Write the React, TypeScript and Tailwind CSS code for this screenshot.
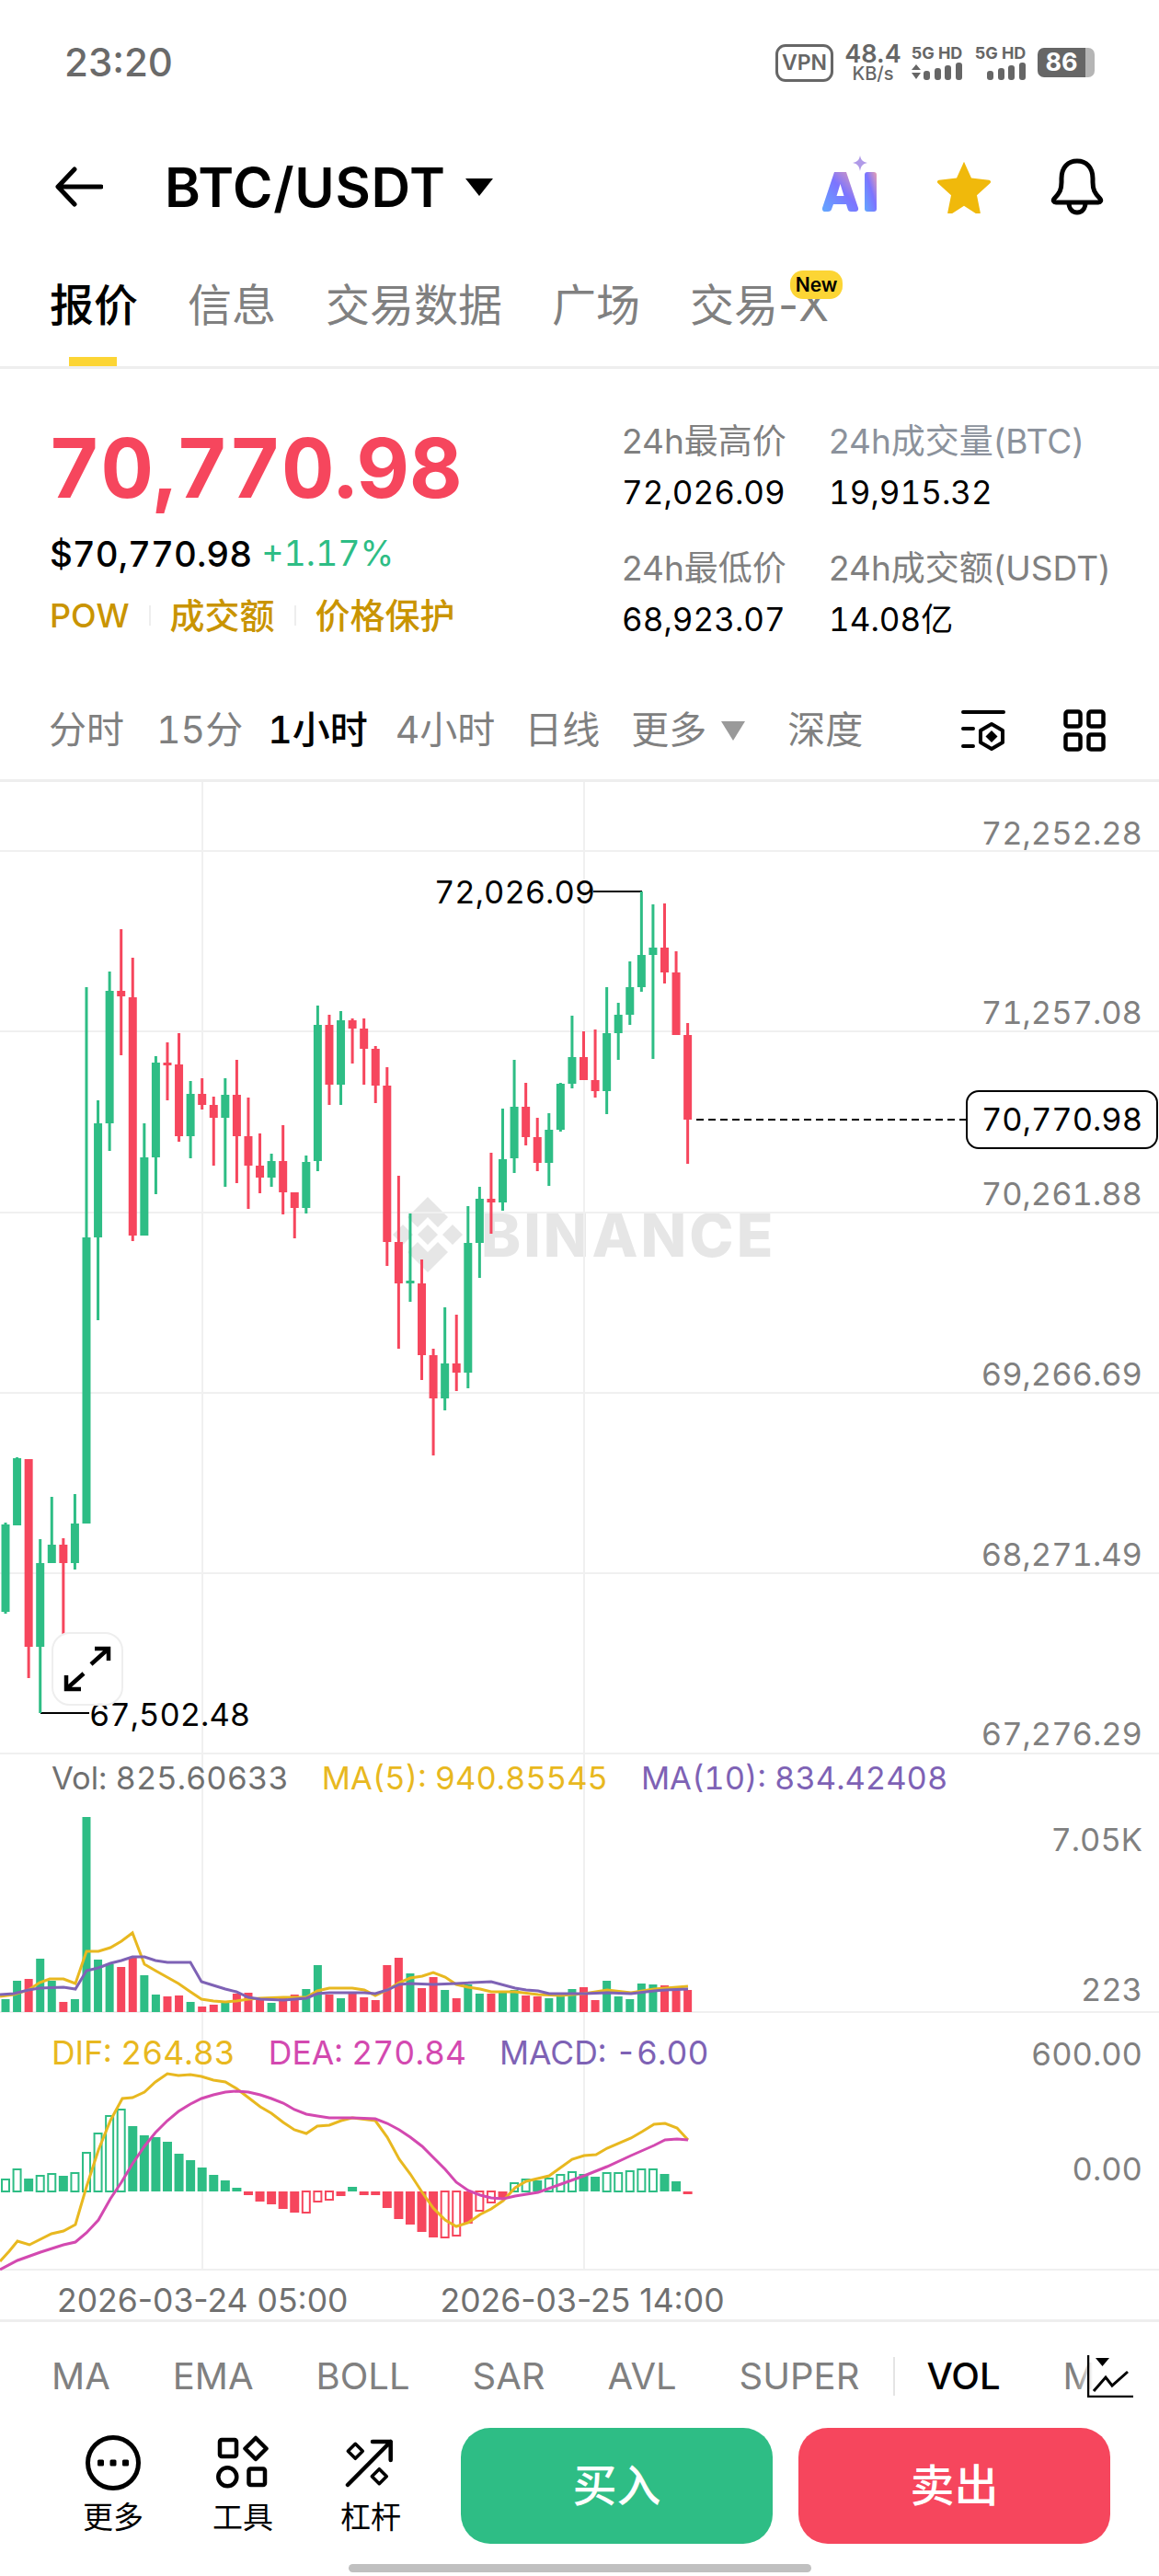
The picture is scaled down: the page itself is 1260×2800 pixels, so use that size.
import clsx from 'clsx';

const UP = '#2EBD85';
const DOWN = '#F6465D';
const CJK = "font-['Inter','Noto_Sans_CJK_SC',sans-serif]";

// candle x position, one slot every 12.57px
const cx = (i: number) => 6 + i * 12.57;

// [up?, bodyTop, bodyBottom, wickTop, wickBottom]
const CANDLES: [number, number, number, number, number][] = [
  [1, 1657, 1752, 1655, 1754], [1, 1585, 1658, 1584, 1658], [0, 1586, 1790, 1586, 1824], [1, 1699, 1790, 1673, 1862],
  [1, 1679, 1699, 1627, 1699], [0, 1679, 1699, 1672, 1778], [1, 1656, 1699, 1624, 1706], [1, 1345, 1656, 1073, 1656],
  [1, 1221, 1345, 1196, 1435], [1, 1077, 1221, 1056, 1251], [0, 1077, 1083, 1010, 1147], [0, 1084, 1343, 1041, 1349],
  [1, 1258, 1343, 1221, 1343], [1, 1155, 1258, 1148, 1298], [0, 1155, 1158, 1133, 1196], [0, 1157, 1235, 1123, 1241],
  [1, 1189, 1235, 1175, 1259], [0, 1189, 1201, 1172, 1206], [0, 1201, 1215, 1192, 1267], [1, 1190, 1215, 1172, 1290],
  [0, 1190, 1235, 1152, 1286], [0, 1235, 1267, 1193, 1314], [0, 1267, 1280, 1232, 1297], [1, 1262, 1280, 1254, 1290],
  [0, 1262, 1296, 1223, 1320], [0, 1296, 1313, 1296, 1346], [1, 1263, 1313, 1256, 1319], [1, 1114, 1262, 1093, 1273],
  [0, 1114, 1179, 1103, 1201], [1, 1109, 1179, 1099, 1201], [0, 1109, 1118, 1107, 1156], [0, 1118, 1140, 1107, 1179],
  [0, 1140, 1180, 1137, 1199], [0, 1180, 1350, 1160, 1376], [0, 1350, 1395, 1278, 1466], [1, 1392, 1395, 1319, 1415],
  [0, 1395, 1473, 1369, 1500], [0, 1473, 1520, 1466, 1582], [1, 1482, 1520, 1421, 1533], [0, 1482, 1492, 1429, 1512],
  [1, 1351, 1492, 1311, 1509], [1, 1303, 1351, 1290, 1389], [0, 1303, 1307, 1253, 1341], [1, 1260, 1307, 1205, 1316],
  [1, 1203, 1259, 1152, 1275], [0, 1203, 1236, 1177, 1245], [0, 1236, 1264, 1215, 1273], [1, 1228, 1264, 1210, 1289],
  [1, 1178, 1228, 1177, 1230], [1, 1149, 1178, 1104, 1183], [0, 1149, 1174, 1121, 1174], [0, 1174, 1186, 1119, 1193],
  [1, 1123, 1186, 1073, 1211], [1, 1103, 1123, 1090, 1152], [1, 1073, 1103, 1045, 1114], [1, 1038, 1073, 969, 1078],
  [1, 1030, 1038, 983, 1151], [0, 1030, 1057, 982, 1069], [0, 1057, 1125, 1034, 1125], [0, 1125, 1217, 1112, 1265],
];

const VOL_BASE = 2187;
const VOL_TOPS = [
  2173, 2153, 2151, 2129, 2153, 2176, 2173, 1975, 2130, 2135, 2138, 2127, 2147, 2168, 2170, 2169, 2176, 2181, 2179, 2177,
  2167, 2166, 2174, 2177, 2172, 2168, 2162, 2136, 2168, 2172, 2167, 2171, 2174, 2136, 2128, 2145, 2161, 2149, 2163, 2172,
  2157, 2167, 2167, 2166, 2163, 2169, 2170, 2172, 2169, 2162, 2160, 2174, 2153, 2170, 2173, 2156, 2157, 2158, 2161, 2163,
];

const MA5 = '0,2170 15,2168 31,2163 43,2155 54,2151 69,2151 82,2156 94,2121 107,2121 120,2117 132,2110 144,2101 157,2135 169,2142 194,2156 207,2165 219,2173 232,2175 245,2176 257,2175 270,2173 283,2172 308,2171 333,2171 345,2164 358,2161 383,2161 396,2163 408,2169 421,2163 434,2155 446,2150 459,2148 471,2144 484,2149 496,2157 509,2160 522,2162 534,2165 560,2165 585,2168 610,2169 635,2167 660,2163 686,2166 711,2162 748,2159';
const MA10 = '0,2168 15,2167 31,2163 43,2161 69,2160 82,2162 94,2142 107,2139 120,2134 132,2131 144,2127 157,2127 169,2131 182,2133 207,2133 219,2154 232,2158 245,2162 257,2165 270,2171 283,2173 308,2174 333,2172 345,2167 358,2166 396,2166 408,2167 421,2163 434,2157 446,2156 471,2157 496,2156 534,2154 560,2161 572,2163 585,2164 597,2167 635,2167 660,2166 686,2167 711,2164 723,2163 748,2162';
const DIF = '0,2458 10,2447 19,2436 32,2440 56,2428 69,2425 82,2418 94,2377 107,2337 120,2305 133,2281 144,2280 157,2274 169,2263 182,2254 194,2256 207,2255 219,2257 232,2261 245,2263 257,2270 270,2280 283,2290 295,2297 308,2307 320,2315 333,2319 345,2311 358,2310 371,2305 383,2302 408,2305 421,2323 434,2347 446,2363 459,2383 471,2400 484,2413 496,2420 509,2416 522,2407 534,2401 547,2392 560,2378 572,2371 597,2365 622,2347 635,2343 648,2342 660,2335 686,2324 698,2317 711,2309 723,2308 736,2313 748,2326';
const DEA = '0,2467 19,2457 44,2448 69,2440 82,2437 94,2427 107,2413 120,2390 132,2372 144,2352 157,2333 169,2318 182,2305 194,2295 207,2287 219,2281 232,2277 245,2274 257,2273 270,2274 283,2277 295,2281 308,2286 320,2293 333,2298 345,2300 358,2302 383,2302 408,2303 421,2308 434,2315 446,2323 459,2333 471,2345 484,2358 496,2372 509,2381 522,2386 534,2389 547,2390 560,2387 585,2383 610,2374 635,2365 660,2355 686,2343 711,2332 723,2326 736,2325 748,2326';

const MACD_BASE = 2382;
// [top or bottom y, hollow?]
const MACD: [number, number][] = [
  [2369, 1], [2358, 1], [2368, 0], [2365, 1], [2363, 1], [2365, 0], [2362, 1], [2340, 1], [2319, 1], [2300, 1],
  [2293, 1], [2311, 0], [2321, 0], [2323, 0], [2328, 0], [2341, 0], [2348, 0], [2356, 0], [2364, 0], [2370, 0],
  [2378, 0], [2386, 0], [2393, 0], [2396, 0], [2401, 0], [2405, 0], [2405, 1], [2393, 1], [2391, 1], [2387, 0],
  [2377, 0], [2386, 0], [2386, 0], [2400, 0], [2412, 0], [2418, 0], [2426, 0], [2432, 0], [2432, 1], [2430, 1],
  [2417, 0], [2403, 1], [2394, 1], [2390, 0], [2373, 1], [2369, 1], [2370, 0], [2368, 1], [2364, 1], [2361, 1],
  [2363, 0], [2366, 0], [2362, 1], [2362, 1], [2360, 1], [2358, 1], [2358, 1], [2363, 0], [2371, 0], [2385, 0],
];
// bars after i=20 are red until the flip back to green, i=30 is a lone green one
const macdUp = (i: number) => i <= 20 || i === 30 || (i >= 44 && i <= 58);

const CHART_TOP = 850;
const AXIS = [
  ['72,252.28', 906], ['71,257.08', 1101], ['70,261.88', 1298], ['69,266.69', 1494], ['68,271.49', 1690], ['67,276.29', 1885],
  ['7.05K', 2000], ['223', 2163], ['600.00', 2233], ['0.00', 2358],
] as const;

function StatusBar() {
  return (
    <div className="h-[136px] flex items-center justify-between pl-[70px] pr-[70px] shrink-0">
      <span className="text-[42px] font-medium text-[#6a6a6a] leading-none">23:20</span>
      <div className="flex items-center gap-[12px] text-[#666]">
        <span className="w-[63px] h-[41px] border-[3px] border-[#666] rounded-[11px] flex items-center justify-center text-[23px] font-semibold">VPN</span>
        <div className="flex flex-col items-center w-[58px] leading-none ml-[2px]">
          <span className="text-[27px] font-semibold leading-[24px]">48.4</span>
          <span className="text-[20px] font-medium leading-[18px]">KB/s</span>
        </div>
        <Signal arrows />
        <Signal />
        <div className="flex items-center">
          <span className="w-[52px] h-[32px] bg-[#666] rounded-l-[7px] flex items-center justify-center text-[27px] font-bold text-white">86</span>
          <span className="w-[10px] h-[32px] bg-[#b5b5b5] rounded-r-[7px]" />
        </div>
      </div>
    </div>
  );
}

function Signal({ arrows }: { arrows?: boolean }) {
  return (
    <div className="flex flex-col items-center w-[57px]">
      <span className="text-[18px] font-bold leading-[20px] whitespace-nowrap">5G HD</span>
      <svg width="57" height="20" viewBox="0 0 57 20" fill="#666">
        {arrows && <path d="M1 8 6 2l5 6zM1 11h10l-5 7z" />}
        <rect x="14" y="9" width="7" height="10" rx="3" />
        <rect x="26" y="6" width="7" height="13" rx="3" />
        <rect x="37" y="3" width="7" height="16" rx="3" />
        <rect x="49" y="0" width="7" height="19" rx="3" />
      </svg>
    </div>
  );
}

function Header() {
  return (
    <div className="h-[134px] flex items-center shrink-0 pl-[60px] pr-[60px]">
      <svg width="52" height="44" viewBox="0 0 52 44" fill="none" stroke="#000" strokeWidth="5" strokeLinecap="round" strokeLinejoin="round">
        <path d="M4 22h46M21 3 3 22l18 19" />
      </svg>
      <span className="ml-[67px] text-[59px] font-semibold tracking-[0.7px] text-black leading-none">BTC/USDT</span>
      <svg className="ml-[20px]" width="32" height="20" viewBox="0 0 32 20"><path d="M1 1h30L16 20z" fill="#000" /></svg>
      <div className="ml-auto flex items-center">
        <AiIcon />
        <svg className="ml-[64px]" width="60" height="58" viewBox="0 0 24 23">
          <path
            d="M12 .6l3.2 7.1 7.7.9c.7.1 1 .9.4 1.4l-5.7 5.2 1.5 7.5c.1.7-.6 1.2-1.200.9L12 19.800l-5.900 3.800c-.6.300-1.300-.2-1.200-.9l1.500-7.500L.7 10c-.6-.5-.3-1.300.4-1.400l7.700-.9z"
            fill="#F0B90B"
          />
        </svg>
        <svg className="ml-[64px]" width="58" height="62" viewBox="0 0 58 62" fill="none" stroke="#000" strokeWidth="5" strokeLinejoin="round">
          <path d="M4 44c6-6 8-10 8-18v-4C12 10 19 3 29 3s17 7 17 19v4c0 8 2 12 8 18 1.500 2 .5 4-2 4H6c-2.500 0-3.500-2-2-4z" />
          <path d="M20 48c0 7 4 11 9 11s9-4 9-11" />
        </svg>
      </div>
    </div>
  );
}

function AiIcon() {
  return (
    <svg width="60" height="62" viewBox="0 0 60 62" className="-mt-[6px]">
      <defs>
        <linearGradient id="ai" x1="0" y1="1" x2="1" y2="0">
          <stop offset="0" stopColor="#62A8FF" />
          <stop offset="0.55" stopColor="#7C74FF" />
          <stop offset="1" stopColor="#E8A0B0" />
        </linearGradient>
      </defs>
      <path d="M41 0c1 5 3 7 8 8-5 1-7 3-8 9-1-6-3-8-8-9 5-1 7-3 8-8z" fill="#B09AE8" />
      <path
        d="M13 18h13l13 39c.5 2-.5 4-3 4h-5c-2 0-3-1-3.500-3l-1.500-5H12l-2 5.500C9.500 60 8.500 61 6 61H3c-2.500 0-3.500-2-3-4zm6.500 13-4 13h8z"
        fill="url(#ai)"
      />
      <rect x="46" y="18" width="13" height="43" rx="3" fill="url(#ai)" />
    </svg>
  );
}

function Tabs() {
  const tabs = ['信息', '交易数据', '广场'];
  return (
    <div className="h-[131px] shrink-0 border-b-[3px] border-[#eeeeee] pl-[54px] flex items-start gap-[54px] pt-[31px] text-[48px] leading-[62px] text-[#808080]">
      <span className="relative h-[97px] font-medium text-black">
        报价
        <span className="absolute left-[21px] bottom-0 w-[52px] h-[10px] bg-[#FCD535]" />
      </span>
      {tabs.map((t) => (
        <span key={t}>{t}</span>
      ))}
      <span className="relative whitespace-nowrap">
        交易-X
        <span className="absolute left-[109px] top-[-7px] w-[57px] h-[31px] bg-[#FCD535] rounded-[14px] flex items-center justify-center text-[21px] font-semibold text-black">
          New
        </span>
      </span>
    </div>
  );
}

function Stat({ label, value, bluish }: { label: string; value: string; bluish?: boolean }) {
  return (
    <div className="flex flex-col gap-[13px] leading-[42px] whitespace-nowrap">
      <span className={clsx('text-[37px]', bluish ? 'text-[#8b929c]' : 'text-[#808080]')}>{label}</span>
      <span className="text-[35px] text-black tabular-nums">{value}</span>
    </div>
  );
}

function PriceBlock() {
  return (
    <div className="h-[340px] shrink-0 flex pl-[54px] pt-[58px]">
      <div className="w-[622px]">
        <div className="-ml-[2px] text-[89px] font-bold leading-[100px] text-[#F6465D] tabular-nums">70,770.98</div>
        <div className="mt-[20px] flex items-center gap-[10px] text-[38.500px] leading-[46px] tabular-nums">
          <span className="text-black font-medium">$70,770.98</span>
          <span className="text-[37.500px] text-[#2EBD85]">+1.17%</span>
        </div>
        <div className="mt-[21px] flex items-center text-[38px] leading-[46px] text-[#C99400] font-medium">
          <span className="text-[36px]">POW</span>
          <span className="mx-[21px] w-[2px] h-[22px] bg-[#eeeeee]" />
          <span>成交额</span>
          <span className="mx-[21px] w-[2px] h-[22px] bg-[#eeeeee]" />
          <span>价格保护</span>
        </div>
      </div>
      <div className="grid grid-cols-[225px_auto] gap-y-[41px] self-start">
        <Stat label="24h最高价" value="72,026.09" />
        <Stat label="24h成交量(BTC)" value="19,915.32" bluish />
        <Stat label="24h最低价" value="68,923.07" />
        <Stat label="24h成交额(USDT)" value="14.08亿" />
      </div>
    </div>
  );
}

function IntervalRow() {
  return (
    <div className="h-[109px] shrink-0 border-b-[3px] border-[#eeeeee] flex items-center pl-[53px] pr-[58px] text-[41px] text-[#808080] tabular-nums">
      <span>分时</span>
      <span className="ml-[35px]">15分</span>
      <span className="ml-[27px] text-black font-medium">1小时</span>
      <span className="ml-[30px]">4小时</span>
      <span className="ml-[32px]">日线</span>
      <span className="ml-[34px]">更多</span>
      <svg className="ml-[16px]" width="26" height="21" viewBox="0 0 26 21"><path d="M0 0h26L13 21z" fill="#9a9a9a" /></svg>
      <span className="ml-[46px]">深度</span>
      <svg className="ml-auto" width="48" height="45" viewBox="0 0 48 45" fill="none" stroke="#000" strokeWidth="4" strokeLinecap="round" strokeLinejoin="round">
        <path d="M2 2h44M2 20h11M2 39h11" />
        <path d="M33 15l12 7v13l-12 7-12-7V22z" />
        <path d="M33 22l6.500 6.500L33 35l-6.500-6.500z" fill="#000" stroke="none" />
      </svg>
      <svg className="ml-[63px]" width="46" height="46" viewBox="0 0 46 46" fill="none" stroke="#000" strokeWidth="4.500">
        <rect x="2.500" y="2.500" width="16" height="16" rx="2.500" />
        <rect x="27.500" y="2.500" width="16" height="16" rx="2.500" />
        <rect x="2.500" y="27.500" width="16" height="16" rx="2.500" />
        <rect x="27.500" y="27.500" width="16" height="16" rx="2.500" />
      </svg>
    </div>
  );
}

function ChartDrawing() {
  const h = 2470 - CHART_TOP;
  return (
    <svg className="absolute inset-0" width="1260" height={h} viewBox={`0 ${CHART_TOP} 1260 ${h}`}>
      {[925, 1121, 1318, 1514, 1710, 1906, 2187, 2467].map((y) => (
        <line key={y} x1="0" x2="1260" y1={y} y2={y} stroke="#f0f0f0" strokeWidth="2" />
      ))}
      {[220, 635].map((x) => (
        <line key={x} x1={x} x2={x} y1={CHART_TOP} y2="2467" stroke="#f0f0f0" strokeWidth="2" />
      ))}
      {/* high / low / last price leaders */}
      <path d="M645 969H698M44 1862H97" stroke="#000" strokeWidth="2" fill="none" />
      <line x1="757" x2="1050" y1="1217" y2="1217" stroke="#000" strokeWidth="2" strokeDasharray="8 5" />
      {CANDLES.map(([up, top, bottom, wickTop, wickBottom], i) => (
        <g key={i} fill={up ? UP : DOWN}>
          <rect x={cx(i) - 1.5} y={wickTop} width="3" height={wickBottom - wickTop} />
          <rect x={cx(i) - 4.5} y={top} width="9" height={Math.max(bottom - top, 3)} />
        </g>
      ))}
      {VOL_TOPS.map((top, i) => (
        <rect key={i} x={cx(i) - 4.5} y={top} width="9" height={VOL_BASE - top} fill={CANDLES[i][0] ? UP : DOWN} />
      ))}
      <polyline points={MA5} fill="none" stroke="#E8B820" strokeWidth="3" />
      <polyline points={MA10} fill="none" stroke="#7E62B5" strokeWidth="3" />
      {MACD.map(([y, hollow], i) => {
        const color = macdUp(i) ? UP : DOWN;
        const top = Math.min(y, MACD_BASE);
        const height = Math.max(Math.abs(y - MACD_BASE), 3);
        return hollow ? (
          <rect key={i} x={cx(i) - 4} y={top} width="8" height={height} fill="none" stroke={color} strokeWidth="2" />
        ) : (
          <rect key={i} x={cx(i) - 5} y={top} width="10" height={height} fill={color} />
        );
      })}
      <polyline points={DIF} fill="none" stroke="#E8B820" strokeWidth="3" />
      <polyline points={DEA} fill="none" stroke="#D349B0" strokeWidth="3" />
    </svg>
  );
}

function ChartArea() {
  return (
    <div className="relative h-[1618px] shrink-0 overflow-hidden text-[34.500px] leading-none whitespace-nowrap tabular-nums">
      {/* watermark sits under the candles */}
      <div className="absolute left-[427px] top-[451px] flex items-center gap-[20px] text-[#e6e6e6]">
        <svg width="76" height="82" viewBox="0 0 76 82" fill="#e6e6e6">
          <path d="M38 0 60 22 49 33 38 22 27 33 16 22zM11 30l11 11-11 11L0 41zM65 30l11 11-11 11-11-11zM38 30l11 11-11 11-11-11zM27 49l11 11 11-11 11 11-22 22-22-22z" />
        </svg>
        <span className="text-[65px] font-extrabold tracking-[3px] leading-none">BINANCE</span>
      </div>

      <ChartDrawing />

      <span className="absolute left-[472px] top-[103px] text-black">72,026.09</span>
      <span className="absolute left-[97px] top-[997px] text-black">67,502.48</span>

      {AXIS.map(([label, y]) => (
        <span key={label} className="absolute right-[18px] text-[#808080]" style={{ top: y - CHART_TOP - 17 }}>
          {label}
        </span>
      ))}

      <span className="absolute left-[1050px] top-[335px] w-[209px] h-[64px] bg-white border-2 border-black rounded-[14px] flex items-center justify-center text-black">
        70,770.98
      </span>

      <button className="absolute left-[56px] top-[924px] w-[78px] h-[80px] bg-white/95 border-2 border-[#eeeeee] rounded-[20px] flex items-center justify-center">
        <svg width="52" height="50" viewBox="0 0 52 50" fill="none" stroke="#000" strokeWidth="4.500">
          <path d="M30 20 49 3M34 3h15v13M22 30 3 47M3 32v15h16" />
        </svg>
      </button>

      <div className="absolute left-[56px] top-[1066px] flex gap-[36px]">
        <span className="text-[#707070]">Vol: 825.60633</span>
        <span className="text-[#E8B820]">MA(5): 940.85545</span>
        <span className="text-[#7E62B5]">MA(10): 834.42408</span>
      </div>
      <div className="absolute left-[56px] top-[1364px] flex gap-[36px] text-[35.500px]">
        <span className="text-[#E8B820]">DIF: 264.83</span>
        <span className="text-[#D349B0]">DEA: 270.84</span>
        <span className="text-[#7E62B5]">MACD: -6.00</span>
      </div>
    </div>
  );
}

function DateRow() {
  return (
    <div className="h-[56px] shrink-0 border-b-[3px] border-[#eeeeee] flex items-center pt-[12px] pl-[62px] gap-[100px] text-[35.500px] text-[#707070] leading-none">
      <span>2026-03-24 05:00</span>
      <span>2026-03-25 14:00</span>
    </div>
  );
}

function IndicatorRow() {
  const items = ['MA', 'EMA', 'BOLL', 'SAR', 'AVL', 'SUPER'];
  return (
    <div className="relative h-[98px] shrink-0 flex items-center pt-[20px] pl-[56px] gap-[68px] text-[40px] text-[#808080] overflow-hidden">
      {items.map((t) => (
        <span key={t}>{t}</span>
      ))}
      <span className="-ml-[31px] w-[2px] h-[42px] shrink-0 bg-[#e4e4e4]" />
      <span className="-ml-[34px] text-black font-medium">VOL</span>
      <span>MACD</span>
      <div className="absolute right-0 top-0 bottom-0 w-[90px] pt-[20px] bg-gradient-to-r from-transparent via-white via-[20%] to-white flex items-center justify-end pr-[28px]">
        <svg width="50" height="46" viewBox="0 0 50 46" fill="none" stroke="#000" strokeWidth="2.500">
          <path d="M1 0v45h49" />
          <path d="M7 39l13-15 7 9 17-15" strokeWidth="3" />
          <path d="M9 3h15l-7.500 9z" fill="#000" stroke="none" />
        </svg>
      </div>
    </div>
  );
}

function ActionBar() {
  return (
    <div className="h-[126px] mt-[17px] shrink-0 flex pl-[90px]">
      <ActionItem label="更多">
        <svg width="60" height="60" viewBox="0 0 60 60" fill="none" stroke="#000" strokeWidth="5">
          <circle cx="30" cy="30" r="27.500" />
          <rect x="13" y="26.500" width="7" height="7" fill="#000" stroke="none" rx="1.500" />
          <rect x="26.500" y="26.500" width="7" height="7" fill="#000" stroke="none" rx="1.500" />
          <rect x="40" y="26.500" width="7" height="7" fill="#000" stroke="none" rx="1.500" />
        </svg>
      </ActionItem>
      <div className="ml-[75px]">
        <ActionItem label="工具">
          <svg width="58" height="60" viewBox="0 0 58 60" fill="none" stroke="#000" strokeWidth="4.500" strokeLinejoin="round">
            <rect x="4" y="5" width="18" height="18" rx="2" />
            <path d="M43 3l11.500 11.500L43 26 31.500 14.500z" />
            <circle cx="12.300" cy="45.300" r="10" />
            <rect x="35.500" y="36.500" width="17.500" height="17.500" rx="2" />
          </svg>
        </ActionItem>
      </div>
      <div className="ml-[73px]">
        <ActionItem label="杠杆">
          <svg width="56" height="60" viewBox="0 0 56 60" fill="none" stroke="#000" strokeWidth="4.500" strokeLinecap="round" strokeLinejoin="round">
            <path d="M3 54 49.700 7M30 7h19.700v20" />
            <path d="M11.300 9.300l8 8-8 8-8-8zM37.300 36.700l8 8-8 8-8-8z" strokeWidth="3.500" />
          </svg>
        </ActionItem>
      </div>
      <button className="ml-[65px] w-[339px] h-[126px] rounded-[32px] bg-[#2EBD85] text-white text-[48px] font-medium">买入</button>
      <button className="ml-[28px] w-[339px] h-[126px] rounded-[32px] bg-[#F6465D] text-white text-[48px] font-medium">卖出</button>
    </div>
  );
}

function ActionItem({ label, children }: { label: string; children: React.ReactNode }) {
  return (
    <div className="flex flex-col items-center w-[66px] pt-[8px]">
      {children}
      <span className="mt-[11px] text-[33px] leading-[36px] text-black whitespace-nowrap">{label}</span>
    </div>
  );
}

export default function App() {
  return (
    <div className={`w-[1260px] h-[2800px] bg-white overflow-hidden flex flex-col relative ${CJK}`}>
      <StatusBar />
      <Header />
      <Tabs />
      <PriceBlock />
      <IntervalRow />
      <ChartArea />
      <DateRow />
      <IndicatorRow />
      <ActionBar />
      <div className="mt-auto mb-[4px] mx-auto w-[503px] h-[9px] rounded-full bg-[#c0c0c0]" />
    </div>
  );
}
